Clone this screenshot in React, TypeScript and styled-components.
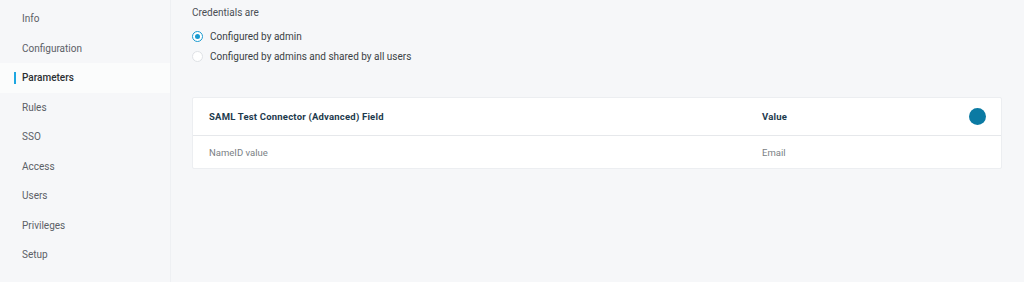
import React from 'react';
import styled, { createGlobalStyle } from 'styled-components';

const GlobalStyle = createGlobalStyle`
    body {
        margin: 0;
        font-family: Roboto, "Liberation Sans", sans-serif;
        background: #f6f7f9;
    }
`;

const Layout = styled.div`
    display: flex;
    height: 282px;
    overflow: hidden;
`;

const Sidebar = styled.nav`
    width: 170px;
    flex-shrink: 0;
    padding-top: 4px;
    background: #f6f7f9;
    border-right: 1px solid #eef0f3;
`;

const NavItem = styled.div<{ $active?: boolean }>`
    position: relative;
    height: 29.5px;
    display: flex;
    align-items: center;
    padding-left: 22px;
    font-size: 10px;
    font-weight: ${p => (p.$active ? 500 : 400)};
    color: ${p => (p.$active ? '#2b2f33' : '#5b6066')};
    background: ${p => (p.$active ? '#fbfcfc' : 'transparent')};

    &::before {
        content: '';
        display: ${p => (p.$active ? 'block' : 'none')};
        position: absolute;
        left: 14px;
        top: 9px;
        width: 2px;
        height: 12px;
        background: #1ea7e1;
    }
`;

const Main = styled.main`
    flex: 1;
    padding: 7px 22px 0 21px;
`;

const Label = styled.div`
    font-size: 10px;
    color: #4a4f55;
    height: 12px;
    line-height: 12px;
`;

const RadioGroup = styled.div`
    margin-top: 10px;
    display: flex;
    flex-direction: column;
    gap: 6px;
`;

const RadioRow = styled.label`
    display: flex;
    align-items: center;
    gap: 7px;
    height: 14px;
    font-size: 10px;
    color: #3a3f44;
`;

const RadioDot = styled.span<{ $checked?: boolean }>`
    box-sizing: border-box;
    width: 11px;
    height: 11px;
    border-radius: 50%;
    background: #fff;
    border: 1px solid ${p => (p.$checked ? '#1a9bd0' : '#dfe2e6')};
    display: flex;
    align-items: center;
    justify-content: center;

    &::after {
        content: '';
        display: ${p => (p.$checked ? 'block' : 'none')};
        width: 5px;
        height: 5px;
        border-radius: 50%;
        background: #1a9bd0;
    }
`;

const Card = styled.section`
    margin-top: 34px;
    background: #fff;
    border: 1px solid #eceef1;
    border-radius: 2px;
`;

const Row = styled.div<{ $head?: boolean }>`
    display: grid;
    grid-template-columns: 553px 1fr 17px;
    align-items: center;
    height: ${p => (p.$head ? '37px' : '32px')};
    padding: 0 15px 0 16px;
    border-bottom: ${p => (p.$head ? '1px solid #e6e8eb' : 'none')};
`;

const HeadCell = styled.div`
    font-size: 9.5px;
    font-weight: 700;
    letter-spacing: 0.2px;
    color: #1d3a4d;
`;

const Cell = styled.div`
    font-size: 9.5px;
    color: #7a7f85;
`;

const AddButton = styled.button`
    width: 17px;
    height: 17px;
    padding: 0;
    border: none;
    border-radius: 50%;
    background: #0b7aa3;
`;

const navItems = ['Info', 'Configuration', 'Parameters', 'Rules', 'SSO', 'Access', 'Users', 'Privileges', 'Setup'];

export default function App() {
    return (
        <Layout>
            <GlobalStyle />
            <Sidebar>
                {navItems.map(item => (
                    <NavItem key={item} $active={item === 'Parameters'}>
                        {item}
                    </NavItem>
                ))}
            </Sidebar>
            <Main>
                <Label>Credentials are</Label>
                <RadioGroup>
                    <RadioRow>
                        <RadioDot $checked />
                        Configured by admin
                    </RadioRow>
                    <RadioRow>
                        <RadioDot />
                        Configured by admins and shared by all users
                    </RadioRow>
                </RadioGroup>
                <Card>
                    <Row $head>
                        <HeadCell>SAML Test Connector (Advanced) Field</HeadCell>
                        <HeadCell>Value</HeadCell>
                        <AddButton aria-label="Add field" />
                    </Row>
                    <Row>
                        <Cell>NameID value</Cell>
                        <Cell>Email</Cell>
                        <span />
                    </Row>
                </Card>
            </Main>
        </Layout>
    );
}
